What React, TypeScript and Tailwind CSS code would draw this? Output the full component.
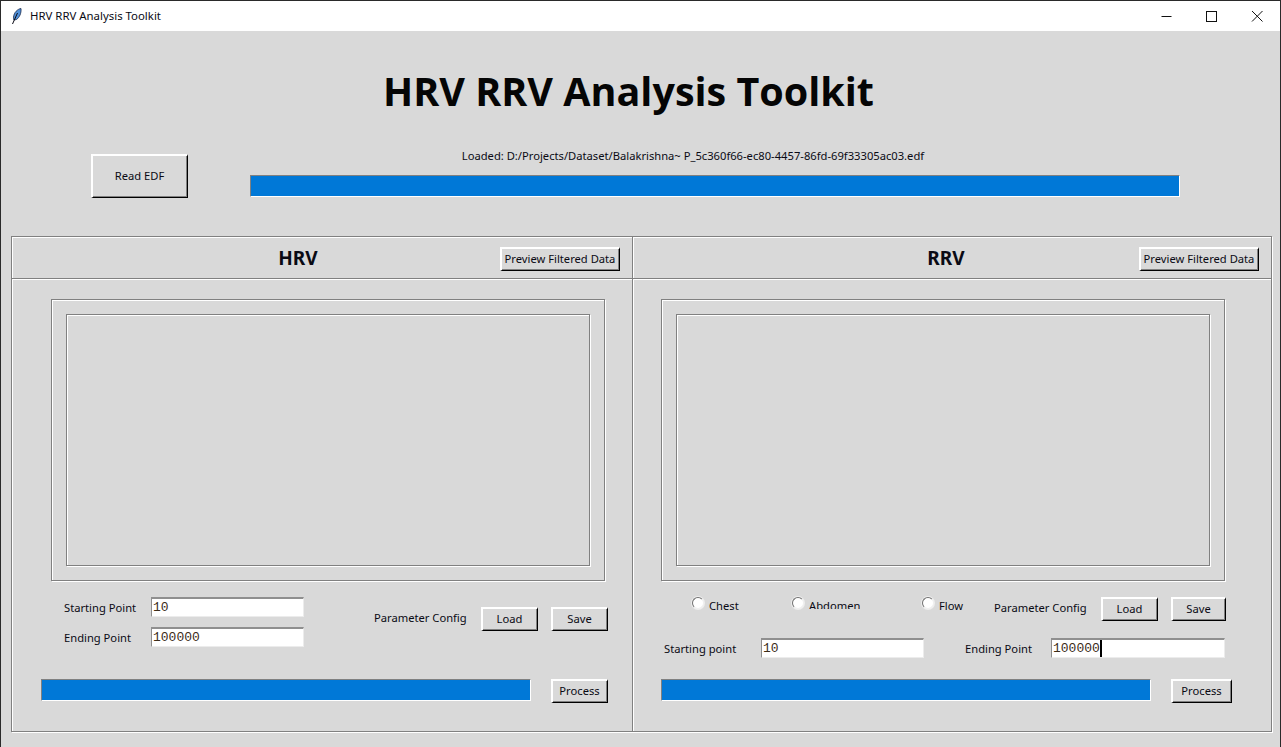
import React from "react";

const groove = "border border-[#808080] shadow-[1px_1px_0_#fff,inset_1px_1px_0_#fff]";
const ui = "font-['Noto_Sans','Open_Sans',sans-serif] text-[11.2px] leading-[16px] text-[#0a0a14] whitespace-nowrap";

function Btn({ label, className }: { label: string; className: string }) {
  return (
    <div className={`flex items-center justify-center shrink-0 pr-[1px] pb-[2px] border-t-2 border-l-2 border-t-white border-l-white border-r border-b border-r-black border-b-black bg-[#d9d9d9] shadow-[inset_-1px_-1px_0_#808080] ${ui} ${className}`}>
      {label}
    </div>
  );
}

function Entry({ value, caret, className }: { value: string; caret?: boolean; className: string }) {
  return (
    <div className={`flex items-center shrink-0 h-[20px] pl-[1px] bg-white border-t-2 border-l border-t-[#8f8f8f] border-l-[#8f8f8f] border-r border-b border-r-[#ececec] border-b-[#ececec] font-['Liberation_Mono',monospace] text-[13px] leading-[16px] text-[#3c2c18] ${className}`}>
      {value}
      {caret && <span className="w-[2px] h-[17px] bg-black" />}
    </div>
  );
}

function Progress({ className }: { className: string }) {
  return <div className={`h-[22px] shrink-0 bg-[#0078d7] border-t border-l border-t-[#808080] border-l-[#808080] border-r border-b border-r-white border-b-white ${className}`} />;
}

function Radio({ label, clip, className }: { label: string; clip?: boolean; className: string }) {
  return (
    <div className={`flex items-start shrink-0 ${ui} ${className}`}>
      <span className="w-[12px] h-[12px] rounded-full bg-white border border-t-[#707070] border-l-[#707070] border-r-[#f0f0f0] border-b-[#f0f0f0] shrink-0 shadow-[0_0_0_1px_#eee]" />
      <span className={`ml-[5px] mt-[1px] ${clip ? "h-[11px] overflow-hidden" : ""}`}>{label}</span>
    </div>
  );
}

function Plot({ className }: { className: string }) {
  return (
    <div className={`${groove} h-[282px] p-[14px] ${className}`}>
      <div className={`${groove} h-full`} />
    </div>
  );
}

function PanelHeader({ title, titleClass, className }: { title: string; titleClass: string; className: string }) {
  return (
    <div className={`flex items-center h-[41px] ${className}`}>
      <div className={`text-center font-['Noto_Sans',sans-serif] font-bold text-[19px] leading-[24px] text-[#0a0a14] ${titleClass}`}>{title}</div>
      <Btn label="Preview Filtered Data" className="w-[120px] h-[24px] self-start mt-[10px]" />
    </div>
  );
}

export default function App() {
  return (
    <div className="w-[1281px] h-[747px] overflow-hidden flex flex-col bg-[#d9d9d9] border-l border-t border-r border-l-[#2a2a2a] border-t-[#2a2a2a] border-r-[#2a2a2a]">
      {/* title bar */}
      <div className="h-[30px] shrink-0 bg-white flex items-center pl-[10px]">
        <svg width="11" height="17" viewBox="0 0 11 17" className="shrink-0">
          <path d="M10 0.5 C6.5 1 3 4.5 2.5 9 L2.8 12 L5.5 11.5 C8.5 9.5 10.5 5 10 0.5 Z" fill="#4f8fd8" stroke="#1a2a4a" strokeWidth="0.8" />
          <path d="M6.5 5 L1.5 16" stroke="#0a0a14" strokeWidth="1" fill="none" />
        </svg>
        <span className={`ml-[8px] ${ui} !text-[11.4px]`}>HRV RRV Analysis Toolkit</span>
        <div className="ml-auto flex items-center">
          <svg width="46" height="30" viewBox="0 0 46 30" fill="none" stroke="#111"><path d="M19.5 15.5 H29.5" /></svg>
          <svg width="46" height="30" viewBox="0 0 46 30" fill="none" stroke="#111"><rect x="18.5" y="10.5" width="10" height="10" /></svg>
          <svg width="46" height="30" viewBox="0 0 46 30" fill="none" stroke="#111"><path d="M18 10 L28.5 20.5 M28.5 10 L18 20.5" /></svg>
        </div>
      </div>

      {/* heading */}
      <div className="h-[123px] shrink-0 flex justify-center pt-[33px] pr-[24px]">
        <h1 className="font-['Open_Sans','Noto_Sans',sans-serif] font-bold text-[39.5px] leading-[54px] text-[#050505]">HRV RRV Analysis Toolkit</h1>
      </div>

      {/* file row */}
      <div className="h-[82px] shrink-0 flex items-start pl-[90px]">
        <Btn label="Read EDF" className="w-[97px] h-[44px]" />
        <div className="ml-[62px] w-[930px] flex flex-col -mt-[6px]">
          <div className={`${ui} text-center pr-[44px]`}>Loaded: D:/Projects/Dataset/Balakrishna~ P_5c360f66-ec80-4457-86fd-69f33305ac03.edf</div>
          <Progress className="w-full mt-[11px]" />
        </div>
      </div>

      {/* panels */}
      <div className={`${groove} ml-[10px] w-[1261px] h-[496px] flex flex-col`}>
        <div className="flex border-b border-b-[#808080] shadow-[0_1px_0_#fff]">
          <PanelHeader title="HRV" titleClass="w-[488px] pl-[84px]" className="w-[621px] border-r border-r-[#808080] shadow-[1px_0_0_#fff]" />
          <PanelHeader title="RRV" titleClass="w-[506px] pl-[120px]" className="flex-1" />
        </div>
        <div className="flex flex-1 min-h-0">
          {/* HRV */}
          <div className="w-[621px] border-r border-r-[#808080] shadow-[1px_0_0_#fff] flex flex-col pt-[20px]">
            <Plot className="ml-[39px] w-[554px]" />
            <div className="flex mt-[16px] h-[62px]">
              <div className="ml-[52px] flex flex-col gap-[10px]">
                <div className="flex items-center">
                  <span className={`w-[87px] pt-[2px] ${ui}`}>Starting Point</span>
                  <Entry value="10" className="w-[153px]" />
                </div>
                <div className="flex items-center">
                  <span className={`w-[87px] pt-[2px] ${ui}`}>Ending Point</span>
                  <Entry value="100000" className="w-[153px]" />
                </div>
              </div>
              <div className="ml-[70px] flex items-start pt-[10px]">
                <span className={`w-[107px] mt-[3px] ${ui}`}>Parameter Config</span>
                <Btn label="Load" className="w-[57px] h-[24px]" />
                <Btn label="Save" className="ml-[13px] w-[57px] h-[24px]" />
              </div>
            </div>
            <div className="flex items-start mt-[20px] ml-[29px]">
              <Progress className="w-[490px]" />
              <Btn label="Process" className="ml-[20px] w-[57px] h-[24px]" />
            </div>
          </div>

          {/* RRV */}
          <div className="flex-1 flex flex-col pt-[20px]">
            <Plot className="ml-[28px] w-[564px]" />
            <div className="flex items-start mt-[16px] h-[25px]">
              <Radio label="Chest" className="ml-[59px] w-[100px]" />
              <Radio label="Abdomen" clip className="w-[130px]" />
              <Radio label="Flow" className="w-[72px]" />
              <span className={`w-[107px] mt-[3px] ${ui}`}>Parameter Config</span>
              <Btn label="Load" className="w-[57px] h-[24px]" />
              <Btn label="Save" className="ml-[13px] w-[55px] h-[24px]" />
            </div>
            <div className="flex items-center mt-[16px] ml-[31px]">
              <span className={`w-[97px] pt-[2px] ${ui}`}>Starting point</span>
              <Entry value="10" className="w-[163px]" />
              <span className={`ml-[41px] w-[86px] pt-[2px] ${ui}`}>Ending Point</span>
              <Entry value="100000" caret className="w-[174px]" />
            </div>
            <div className="flex items-start mt-[21px] ml-[28px]">
              <Progress className="w-[490px]" />
              <Btn label="Process" className="ml-[20px] w-[61px] h-[24px]" />
            </div>
          </div>
        </div>
      </div>
    </div>
  );
}
